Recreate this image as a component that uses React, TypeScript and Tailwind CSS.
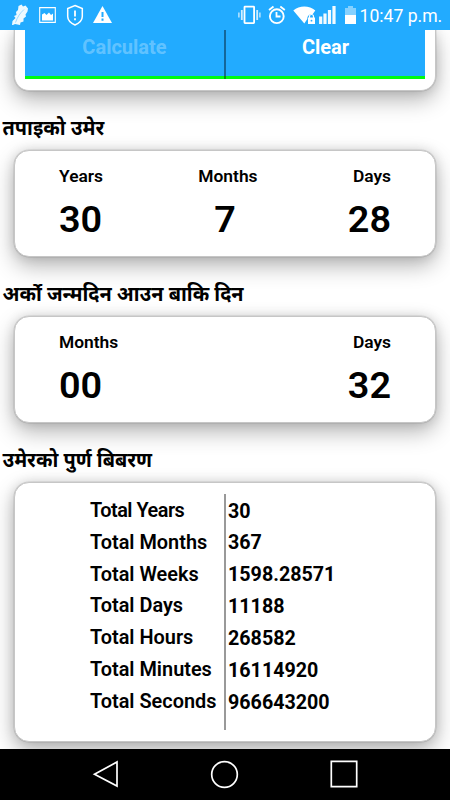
import type { ReactNode } from 'react'

const cardStyle =
  'mx-[14px] border border-[#c6c6c6] bg-white shadow-[0_0_0_0.5px_rgba(0,0,0,0.12),0_9px_22px_rgba(0,0,0,0.29),0_0_12px_rgba(0,0,0,0.12)]'

const totals = [
  { label: 'Total Years', value: '30', tracking: 'tracking-[-0.5px]' },
  { label: 'Total Months', value: '367' },
  { label: 'Total Weeks', value: '1598.28571' },
  { label: 'Total Days', value: '11188' },
  { label: 'Total Hours', value: '268582' },
  { label: 'Total Minutes', value: '16114920' },
  { label: 'Total Seconds', value: '966643200' },
]

function StatusBar() {
  return (
    <header className="relative z-10 flex h-[30px] shrink-0 bg-[#22abff] text-white">
      <svg width="450" height="30" viewBox="0 0 450 30" fill="none" stroke="currentColor">
        {/* feather */}
        <path d="M12 25l.5-4 3-3-1.500-2 2.500-1-.5-3 2-2 .5-4 3-1.500 1.500 2 2.500-1 2.500 3-.5 3-2 3 .5 2-2.500 2v3l-3 1-.5 2.500-5-1-2 1z" fill="currentColor" stroke="none" opacity="0.92" />
        <path d="M15.500 22.500c2-5.500 4.500-9.500 8.500-13" stroke="#7ccbff" strokeWidth="0.7" />
        {/* picture */}
        <path d="M39.700 7.600h15.600v14.800H39.700z" strokeWidth="1.100" />
        <path d="M42 20.500v-6l2.500-1.500 2 2 2.500-2.500 2 2.500 2-1.500v7z" fill="currentColor" stroke="none" />
        {/* shield */}
        <path d="M75 5.500l7.300 3v8c0 4-3 6.500-7.300 8.500-4.300-2-7.300-4.500-7.300-8.500v-8z" strokeWidth="1.500" />
        <path d="M75 10.500v6M75 18.200v2" strokeWidth="1.800" />
        {/* warning */}
        <path d="M102.500 6L112 23H93z" fill="currentColor" stroke="none" />
        <path d="M102.500 12v5M102.500 18.500v2.300" stroke="#22abff" strokeWidth="2" />
        {/* vibrate */}
        <rect x="244.500" y="6.700" width="9.600" height="16.400" rx="0.500" strokeWidth="1.800" />
        <path d="M241.800 10v10M257.200 10v10" strokeWidth="1.800" opacity="0.8" />
        <path d="M238.900 12.500v5M259.900 12.500v5" strokeWidth="1.300" opacity="0.8" />
        {/* alarm */}
        <circle cx="276.800" cy="16.200" r="6.900" strokeWidth="1.900" />
        <path d="M276.500 12v4.500h4M269 10l4.500-3.500M284.800 10l-4.500-3.500" strokeWidth="1.800" />
        {/* wifi with lock */}
        <path d="M293.300 10.500c6-5.500 16-5.500 22 0l-2.500 3.500c-3.500-.5-5.500 2-5.500 5l-3 4.500z" fill="currentColor" stroke="none" />
        <path d="M308 17.500h7V24h-7z" fill="currentColor" stroke="none" />
        <path d="M309.500 18v-1.500a2 2 0 014 0V18" strokeWidth="1.200" />
        <circle cx="311.500" cy="20.700" r="0.900" fill="#22abff" stroke="none" />
        {/* signal */}
        <path d="M320.700 24v-7.500M325 24V13.500M329.500 24V10M334 24V6" strokeWidth="3.200" opacity="0.95" />
        {/* battery */}
        <path d="M345 8h3V6h5v2h3v7h-11z" fill="currentColor" stroke="none" opacity="0.45" />
        <path d="M345 15h11v9h-11z" fill="currentColor" stroke="none" />
      </svg>
      <span className="absolute left-[359.500px] top-[4px] text-[17.600px] leading-6 whitespace-nowrap">10:47 p.m.</span>
    </header>
  )
}

function Heading({ children }: { children: ReactNode }) {
  return (
    <h2 className="h-[59px] shrink-0 pl-[2.500px] pt-[23px] font-['Noto_Sans',sans-serif] text-[19.900px] leading-[28px] font-bold whitespace-nowrap">
      {children}
    </h2>
  )
}

function Stat({ label, value, align, valueStyle = '' }: { label: string; value: string; align: string; valueStyle?: string }) {
  return (
    <div className={`flex flex-col ${align}`}>
      <span className="text-[17.400px] leading-5 font-semibold">{label}</span>
      <span className={`mt-[12px] text-[37.800px] leading-[42px] font-semibold ${valueStyle}`}>{value}</span>
    </div>
  )
}

export default function App() {
  return (
    <div className="flex h-[800px] w-[450px] flex-col overflow-hidden bg-white font-[Roboto,sans-serif] text-black">
      <StatusBar />
      <main className="flex min-h-0 flex-1 flex-col overflow-hidden">
        <div className={`h-[61px] shrink-0 rounded-b-[15px] border-t-0 ${cardStyle}`}>
          <div className="mx-[10px] grid h-[49px] grid-cols-[201px_199px] border-b-[3px] border-[#00fa10] bg-[#22abff] text-center text-[20px] leading-[34px] font-bold text-white">
            <button className="-mb-[3px] border-r-2 border-black/40 bg-clip-padding pb-[15px] text-white/30">Calculate</button>
            <button className="pb-[12px]">Clear</button>
          </div>
        </div>

        <Heading>तपाइको उमेर</Heading>
        <section className={`flex h-[107px] shrink-0 justify-between rounded-[15px] px-[44px] pt-[15px] ${cardStyle}`}>
          <Stat label="Years" value="30" align="items-start" />
          <Stat label="Months" value="7" align="items-center ml-[5px]" valueStyle="mr-[6px]" />
          <Stat label="Days" value="28" align="items-end" />
        </section>

        <Heading>अर्को जन्मदिन आउन बाकि दिन</Heading>
        <section className={`flex h-[107px] shrink-0 justify-between rounded-[15px] px-[44px] pt-[15px] ${cardStyle}`}>
          <Stat label="Months" value="00" align="items-start" />
          <Stat label="Days" value="32" align="items-end" />
        </section>

        <Heading>उमेरको पुर्ण बिबरण</Heading>
        <section className={`flex h-[260px] shrink-0 rounded-[15px] pt-[11px] pl-[75px] ${cardStyle}`}>
          <div className="h-[236px] w-[136px] border-r-2 border-[#999] pt-px text-[19.900px] leading-[31.800px] font-semibold whitespace-nowrap">
            {totals.map(t => <div key={t.label} className={t.tracking}>{t.label}</div>)}
          </div>
          <div className="pl-[2px] pt-[1.500px] text-[19.700px] leading-[31.900px] font-bold">
            {totals.map(t => <div key={t.label}>{t.value}</div>)}
          </div>
        </section>
      </main>

      <nav className="relative z-10 flex h-[51px] shrink-0 items-center bg-black">
        <svg width="450" height="51" viewBox="0 0 450 51" fill="none" stroke="white" strokeWidth="1.700">
          <path d="M117 13v24L94.500 25.300z" />
          <circle cx="224.500" cy="25.500" r="12.800" />
          <path d="M331.300 12.300h25.400v25.400h-25.400z" />
        </svg>
      </nav>
    </div>
  )
}
